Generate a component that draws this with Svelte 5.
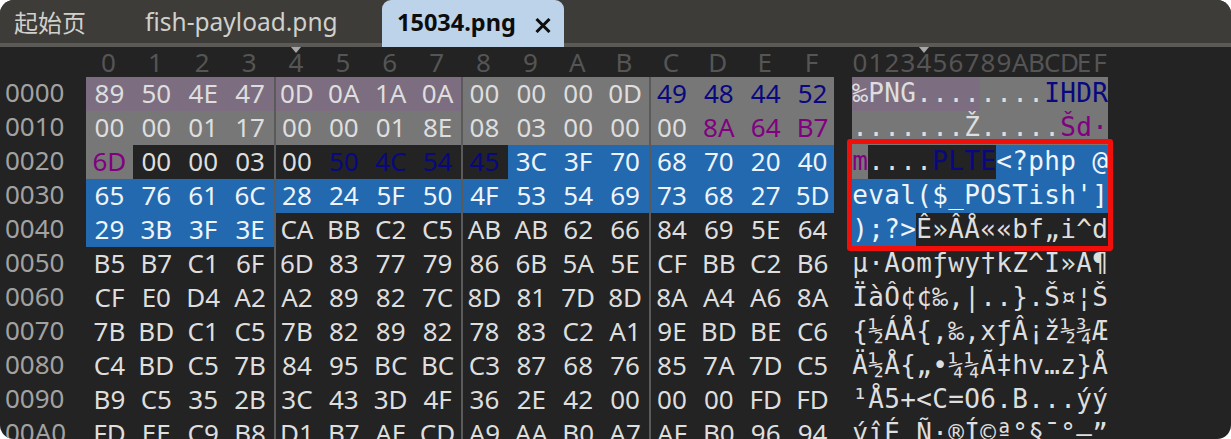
<script>
	const HEX = [
		'89 50 4E 47 0D 0A 1A 0A 00 00 00 0D 49 48 44 52',
		'00 00 01 17 00 00 01 8E 08 03 00 00 00 8A 64 B7',
		'6D 00 00 03 00 50 4C 54 45 3C 3F 70 68 70 20 40',
		'65 76 61 6C 28 24 5F 50 4F 53 54 69 73 68 27 5D',
		'29 3B 3F 3E CA BB C2 C5 AB AB 62 66 84 69 5E 64',
		'B5 B7 C1 6F 6D 83 77 79 86 6B 5A 5E CF BB C2 B6',
		'CF E0 D4 A2 A2 89 82 7C 8D 81 7D 8D 8A A4 A6 8A',
		'7B BD C1 C5 7B 82 89 82 78 83 C2 A1 9E BD BE C6',
		'C4 BD C5 7B 84 95 BC BC C3 87 68 76 85 7A 7D C5',
		'B9 C5 35 2B 3C 43 3D 4F 36 2E 42 00 00 00 FD FD',
		'FD EE C9 B8 D1 B7 AE CD A9 AA B0 A7 AF B0 96 94',
	];
	const ASCII = [
		'‰PNG........IHDR',
		'.......Ž.....Šd·',
		'm....PLTE<?php @',
		"eval($_POSTish']",
		');?>Ê»ÂÅ««bf„i^d',
		'µ·Áomƒwy†kZ^Ï»Â¶',
		'ÏàÔ¢¢‰‚|..}.Š¤¦Š',
		'{½ÁÅ{‚‰‚xƒÂ¡ž½¾Æ',
		'Ä½Å{„•¼¼Ã‡hv…z}Å',
		'¹Å5+<C=O6.B...ýý',
		'ýîÉ¸Ñ·®Í©ª°§¯°–”',
	];
	const COLS = '0123456789ABCDEF'.split('');

	const rows = HEX.map((line, r) => ({
		addr: r.toString(16).toUpperCase().padStart(3, '0') + '0',
		bytes: line.split(' '),
		chars: ASCII[r].split(''),
	}));

	// png header bands, then the selected php payload
	function bg(i) {
		if (i < 8) return 'magic';
		if (i <= 32) return 'header';
		if (i <= 40) return 'chunk';
		if (i <= 67) return 'sel';
		return '';
	}

	function ink(i) {
		if ((i >= 12 && i <= 15) || (i >= 37 && i <= 40)) return 'name';
		if (i >= 29 && i <= 32) return 'crc';
		return '';
	}
</script>

<div class="window">
	<div class="tabs">
		<span class="tab start">起始页</span>
		<span class="tab file">fish-payload.png</span>
		<span class="tab active">
			<span>15034.png</span>
			<svg class="close" width="16" height="15" viewBox="0 0 16 15" aria-hidden="true">
				<path d="M1.5 1 14.5 14M14.5 1 1.5 14" stroke="#0d0d0d" stroke-width="3" fill="none" />
			</svg>
		</span>
	</div>

	<div class="editor">
		<div class="hexside">
			<div class="ruler hexruler">
				{#each COLS as c, i}
					<span class="rulecol">{c}{#if i === 4}<i class="mark"></i>{/if}</span>
				{/each}
			</div>
			{#each rows as row, r}
				<div class="line">
					<span class="addr">{row.addr}</span>
					<div class="bytes">
						{#each row.bytes as b, c}
							<span class="byte {bg(r * 16 + c)} {ink(r * 16 + c)}" class:sep={c > 0 && c % 4 === 0} class:end={c === 15}>{b}</span>
						{/each}
					</div>
				</div>
			{/each}
		</div>

		<div class="textside">
			<div class="chars asciiruler">
				{#each COLS as c, i}
					<span class="rulechar">{c}{#if i === 4}<i class="mark"></i>{/if}</span>
				{/each}
			</div>
			<div class="body">
				{#each rows as row, r}
					<div class="chars">
						{#each row.chars as ch, c}
							<span class="char {bg(r * 16 + c)} {ink(r * 16 + c)}">{ch}</span>
						{/each}
					</div>
				{/each}
				<div class="redbox"></div>
			</div>
		</div>
	</div>
</div>

<style>
	:global(body) {
		background: #fff;
	}

	.window {
		height: 439px;
		overflow: hidden;
		border-radius: 14px;
		background: #232323;
		font-family: 'Noto Sans', sans-serif;
	}

	.tabs {
		height: 47px;
		box-sizing: border-box;
		display: flex;
		background: #3d3c39;
		border-bottom: 4px solid #5b5a57;
		color: #d0d0cc;
		font-size: 24.5px;
	}

	.tab {
		line-height: 43px;
		white-space: nowrap;
	}

	.start {
		width: 72px;
		margin-left: 14px;
		font-family: 'Noto Sans CJK SC', sans-serif;
		font-size: 24px;
	}

	.file {
		width: 192px;
		margin-left: 59px;
	}

	.active {
		width: 182px;
		margin-left: 45px;
		height: 47px;
		box-sizing: border-box;
		padding-left: 15px;
		display: flex;
		align-items: flex-start;
		background: #bcd3ea;
		border-radius: 9px 9px 0 0;
		color: #0d0d0d;
		font-size: 23.5px;
		font-weight: 700;
		line-height: 45px;
	}

	.close {
		margin: 18px 0 0 19px;
	}

	.editor {
		display: flex;
		font-size: 26px;
	}

	.ruler {
		height: 30px;
		padding-left: 85px;
		display: grid;
		grid-template-columns: repeat(16, 46.875px);
		color: #555;
		line-height: 30px;
		text-align: center;
	}

	.rulecol,
	.rulechar {
		position: relative;
	}

	.mark {
		position: absolute;
		left: 50%;
		top: 0;
		margin-left: -5px;
		border: 5px solid transparent;
		border-top: 6px solid #a8a8a8;
		border-bottom: 0;
	}

	.line {
		display: flex;
		height: 34px;
	}

	.addr {
		width: 86px;
		padding-left: 5px;
		box-sizing: border-box;
		color: #a2a2a2;
		line-height: 30px;
	}

	.bytes {
		display: grid;
		grid-template-columns: repeat(16, 46.875px);
	}

	.byte {
		color: #dedede;
		line-height: 32px;
		text-align: center;
	}

	.sep {
		box-shadow: inset 2px 0 0 #5a5a5a;
	}

	.end {
		box-shadow: inset -2px 0 0 #232323;
	}

	.textside {
		margin-left: 16px;
	}

	.chars {
		display: grid;
		grid-template-columns: repeat(16, 16px);
		height: 34px;
	}

	.asciiruler {
		height: 30px;
		color: #555;
		line-height: 30px;
	}

	.rulechar {
		text-align: center;
	}

	.body {
		position: relative;
	}

	.char {
		color: #dedede;
		font-family: 'DejaVu Sans Mono', monospace;
		font-size: 26px;
		line-height: 33px;
		text-align: center;
		white-space: pre;
	}

	.magic {
		background: #7c6e80;
	}

	.header {
		background: #777;
	}

	.chunk {
		background: #232323;
	}

	.sel {
		background: #2269b0;
		color: #eef4fa;
	}

	.name {
		color: #08087f;
	}

	.crc {
		color: #800080;
	}

	.redbox {
		position: absolute;
		left: -5px;
		top: 62px;
		width: 266px;
		height: 112px;
		box-sizing: border-box;
		border: 5px solid #f00f0a;
		border-radius: 3px;
	}
</style>
